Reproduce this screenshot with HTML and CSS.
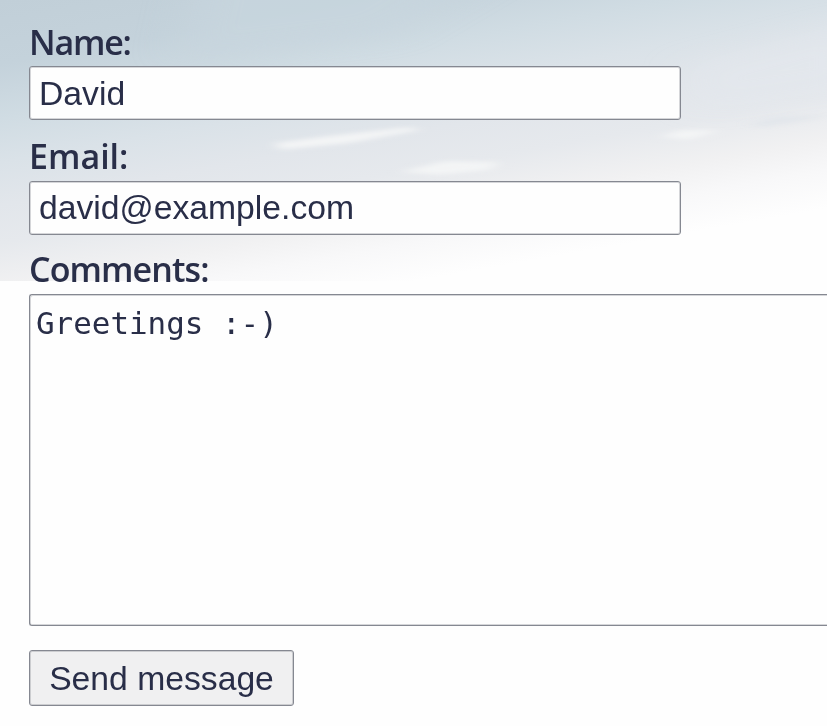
FILE: index.html
```
<!DOCTYPE html>
<html lang="en">
<head>
<meta charset="utf-8">
<title>Contact</title>
<link rel="stylesheet" href="styles.css">
</head>
<body>
<svg class="sky" viewBox="0 0 827 281" preserveAspectRatio="none" aria-hidden="true">
  <defs>
    <filter id="soft" x="-30%" y="-100%" width="160%" height="300%"><feGaussianBlur stdDeviation="22 10"/></filter>
    <filter id="wisp" x="-20%" y="-100%" width="140%" height="300%"><feGaussianBlur stdDeviation="7 2"/></filter>
  </defs>
  <g filter="url(#soft)">
    <path fill="#c8d6de" opacity=".7" d="M200 -30H500L390 35L180 60Z"/>
    <path fill="#e2e7ec" opacity=".7" d="M690 65L860 20V85L700 110Z"/>
  </g>
  <g filter="url(#wisp)" fill="#f3f4f5">
    <path d="M275 143L330 136L410 127L420 130L350 143L280 150Z"/>
    <path d="M400 172L445 161L500 162L490 170L440 175Z"/>
    <path d="M660 137L680 130L720 130L690 140Z"/>
    <path fill="#e2e6eb" d="M750 124L775 117L827 115L800 121L760 127Z"/>
  </g>
</svg>
<form class="contact">
  <div class="row">
    <label class="label name" for="name">Name:</label>
    <input class="control" id="name" type="text" value="David">
  </div>
  <div class="row">
    <label class="label email" for="email">Email:</label>
    <input class="control mail" id="email" type="text" value="david@example.com">
  </div>
  <div class="row">
    <label class="label comments" for="comments">Comments:</label>
    <textarea class="control area" id="comments" spellcheck="false">Greetings :-)</textarea>
  </div>
  <button class="send" type="button">Send message</button>
</form>
</body>
</html>
```
FILE: styles.css
```
* { box-sizing: border-box; }
html { background: #fefefe; }
body {
  margin: 0;
  height: 726px;
  overflow: hidden;
  position: relative;
  color: #292e48;
}
.sky {
  position: absolute;
  inset: 0 0 auto;
  width: 100%;
  height: 281px;
  background: linear-gradient(170deg, #c1cfd8 0, #c4d2db 15%, #d0dce3 28%, #dae2e8 38%, #e2e6eb 48%, #e6e9ed 57%, #f1f1f2 67%, #f8f8f9 74%, #fefefe 83%);
}
.contact {
  position: relative;
  padding: 18px 0 0 29px;
}
.row {
  display: flex;
  flex-direction: column;
  align-items: flex-start;
  margin-bottom: 12px;
}
.label {
  height: 48px;
  font: 600 34px/48px "Open Sans", sans-serif;
  white-space: nowrap;
}
.name { letter-spacing: -1.2px; }
.email { height: 49px; }
.comments { height: 47px; line-height: 44px; letter-spacing: -0.9px; }
.control {
  display: block;
  width: 652px;
  height: 54px;
  margin: 0;
  padding: 0 9px;
  border: 1px solid #858891;
  outline: 1px solid #85889155;
  outline-offset: -2px;
  border-radius: 3px;
  background: #fefefe;
  color: inherit;
  font: 33.7px "Liberation Sans", sans-serif;
}
.mail { padding-bottom: 2px; }
.area {
  width: 100%;
  height: 332px;
  padding: 7px 6px;
  border-right: 0;
  border-radius: 3px 0 0 3px;
  outline: 0;
  box-shadow: inset 1px 1px #85889155, inset 0 -1px #85889155;
  resize: none;
  overflow: hidden;
  font: 30.9px/42px "DejaVu Sans Mono", monospace;
}
.send {
  display: block;
  width: 265px;
  height: 56px;
  margin-top: 24px;
  padding: 0;
  border: 1px solid #858891;
  outline: 1px solid #85889155;
  outline-offset: -2px;
  border-radius: 3px;
  background: #f0f0f1;
  color: inherit;
  font: 33.7px "Liberation Sans", sans-serif;
}
```
